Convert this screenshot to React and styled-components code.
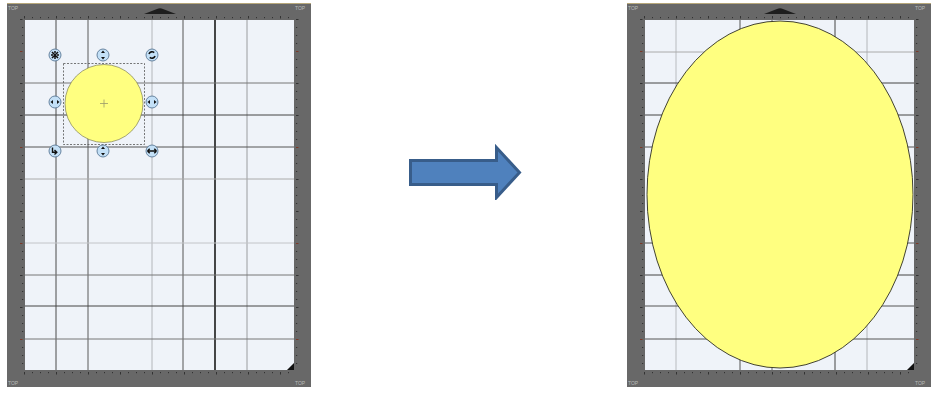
import React from "react";
import styled, { createGlobalStyle } from "styled-components";

const GlobalStyle = createGlobalStyle`
  html, body {
    margin: 0;
    padding: 0;
    background: #ffffff;
    font-family: "Liberation Sans", Arial, sans-serif;
  }
`;

const Page = styled.div`
  width: 932px;
  height: 396px;
  display: flex;
  align-items: flex-start;
  padding: 3px 0 0 7px;
  box-sizing: border-box;
  overflow: hidden;
`;

const Mat = styled.div`
  width: 304px;
  height: 384px;
  background: #686868;
  border-top: 1px solid #b7a77a;
  box-sizing: border-box;
  display: grid;
  grid-template-columns: 18px 269px 17px;
  grid-template-rows: 16px 350px 17px;
`;

const Strip = styled.svg`
  display: block;
  grid-column: ${({ $col }) => $col};
  grid-row: ${({ $row }) => $row};
  overflow: visible;
`;

const Canvas = styled.svg`
  display: block;
  grid-column: 2;
  grid-row: 2;
  background: #eff3f9;
`;

const ArrowBox = styled.div`
  margin: 137px 100px 0 96px;
  width: 120px;
  height: 60px;
  display: flex;
`;

const CornerText = styled.text`
  font-family: "Liberation Sans", Arial, sans-serif;
  font-size: 5px;
  fill: #b9b9b9;
`;

const ticks = (len) => {
  const out = [];
  for (let i = 0; -1 + i * 8 <= len; i++) out.push({ p: -1 + i * 8, big: i % 4 === 0 });
  return out;
};

function TopRuler() {
  return (
    <Strip $col="1 / 4" $row="1" width="304" height="16">
      <CornerText x="1" y="6">TOP</CornerText>
      <CornerText x="288" y="6">TOP</CornerText>
      <path d="M137 10 L150 5 Q153 3.5 156 5 L169 10 Z" fill="#1e1e1e" />
      {ticks(269).map((t, i) => (
        <rect key={i} x={18 + t.p} y={t.big ? 12 : 13} width="1" height={t.big ? 2.5 : 1.2} fill="#333" />
      ))}
    </Strip>
  );
}

function BottomRuler() {
  return (
    <Strip $col="1 / 4" $row="3" width="304" height="17">
      <CornerText x="1" y="15">TOP</CornerText>
      <CornerText x="288" y="15">TOP</CornerText>
      {ticks(269).map((t, i) => (
        <rect key={i} x={18 + t.p} y="2" width="1" height={t.big ? 2.5 : 1.2} fill="#333" />
      ))}
    </Strip>
  );
}

function SideRuler({ side }) {
  const w = side === "left" ? 18 : 17;
  return (
    <Strip $col={side === "left" ? 1 : 3} $row="2" width={w} height="350">
      {ticks(350).map((t, i) => (
        <rect
          key={i}
          x={side === "left" ? (t.big ? 13 : 15) : 2}
          y={t.p}
          width={t.big ? 2.5 : 1.2}
          height="1"
          fill={t.big && i % 12 === 4 ? "#7a3a2a" : "#333"}
        />
      ))}
    </Strip>
  );
}

function GridLines({ vertical, horizontal }) {
  return (
    <g>
      {vertical.map(([x, c, w], i) => (
        <line key={"v" + i} x1={x} y1="0" x2={x} y2="350" stroke={c} strokeWidth={w || 1} />
      ))}
      {horizontal.map(([y, c, w], i) => (
        <line key={"h" + i} x1="0" y1={y} x2="269" y2={y} stroke={c} strokeWidth={w || 1} />
      ))}
    </g>
  );
}

function CornerMark() {
  return <path d="M269 343 L269 350 L262 350 Z" fill="#111" />;
}

function Handle({ x, y, kind }) {
  return (
    <g transform={`translate(${x} ${y})`}>
      <circle r="6" fill="#c3e0f7" stroke="#5a7896" strokeWidth="0.9" />
      {kind === "rotate" && (
        <path d="M-3 -1 A3.2 3.2 0 0 1 2.2 -2.4 M3 1 A3.2 3.2 0 0 1 -2.2 2.4" stroke="#111" strokeWidth="1.6" fill="none" />
      )}
      {kind === "v" && (
        <path d="M0 -4.5 L-2 -2 L2 -2 Z M0 4.5 L-2 2 L2 2 Z" fill="#111" />
      )}
      {kind === "h" && (
        <path d="M-4.5 0 L-2 -2 L-2 2 Z M4.5 0 L2 -2 L2 2 Z" fill="#111" />
      )}
      {kind === "size" && (
        <path d="M-4.5 0 L4.5 0 M-4.5 0 L-2.3 -2.2 M-4.5 0 L-2.3 2.2 M4.5 0 L2.3 -2.2 M4.5 0 L2.3 2.2" stroke="#111" strokeWidth="1.4" fill="none" />
      )}
      {kind === "del" && (
        <path d="M-3 -3 L3 3 M3 -3 L-3 3 M0 -4 V-2 M0 4 V2 M-4 0 H-2 M4 0 H2" stroke="#111" strokeWidth="1.5" />
      )}
      {kind === "flip" && (
        <path d="M-2.5 -3.5 L-2.5 1.2 L1.5 1.2 M-0.5 -1 L1.8 1.2 L-0.5 3.4" stroke="#111" strokeWidth="1.4" fill="none" />
      )}
    </g>
  );
}

const leftV = [
  [31, "#4a4a4a"],
  [63, "#5a5a5a"],
  [127, "#b3b6ba"],
  [158, "#555"],
  [190, "#1a1a1a", 1.6],
  [222, "#9a9c9f"],
];
const leftH = [
  [63, "#777"],
  [95, "#444"],
  [127, "#555"],
  [159, "#aaa"],
  [223, "#c2c4c8"],
  [255, "#777"],
  [286, "#444"],
  [319, "#777"],
];

const rightV = [
  [31, "#b8bbbf"],
  [95, "#555"],
  [127, "#666"],
  [190, "#444"],
  [222, "#b3b6ba"],
];
const rightH = [
  [32, "#aaa"],
  [63, "#444"],
  [95, "#444"],
  [127, "#555"],
  [223, "#555"],
  [255, "#444"],
  [286, "#555"],
  [319, "#555"],
];

function BeforeMat() {
  return (
    <Mat>
      <TopRuler />
      <SideRuler side="left" />
      <Canvas width="269" height="350" viewBox="0 0 269 350">
        <GridLines vertical={leftV} horizontal={leftH} />
        <rect x="38.5" y="43.5" width="81" height="81" fill="none" stroke="#555" strokeWidth="0.8" strokeDasharray="2 1.5" />
        <circle cx="79" cy="83.5" r="39" fill="#ffff80" stroke="#6b6b40" strokeWidth="0.6" />
        <path d="M75 83.5 H83 M79 79.5 V87.5" stroke="#9a9a6a" strokeWidth="0.8" />
        <Handle x={30} y={35} kind="del" />
        <Handle x={78} y={35} kind="v" />
        <Handle x={127} y={35} kind="rotate" />
        <Handle x={30} y={82} kind="h" />
        <Handle x={127} y={82} kind="h" />
        <Handle x={30} y={131} kind="flip" />
        <Handle x={78} y={131} kind="v" />
        <Handle x={127} y={131} kind="size" />
        <CornerMark />
      </Canvas>
      <SideRuler side="right" />
      <BottomRuler />
    </Mat>
  );
}

function AfterMat() {
  return (
    <Mat>
      <TopRuler />
      <SideRuler side="left" />
      <Canvas width="269" height="350" viewBox="0 0 269 350">
        <GridLines vertical={rightV} horizontal={rightH} />
        <ellipse cx="135" cy="174.5" rx="133" ry="173.5" fill="#ffff80" stroke="#2e2e22" strokeWidth="0.9" />
        <CornerMark />
      </Canvas>
      <SideRuler side="right" />
      <BottomRuler />
    </Mat>
  );
}

function BlockArrow() {
  return (
    <svg width="120" height="60" viewBox="0 0 120 60">
      <path
        d="M3.5 20.5 H89.5 V7.5 L112.5 32.5 L89.5 57.5 V44.5 H3.5 Z"
        fill="#4f81bd"
        stroke="#385d8a"
        strokeWidth="3"
        strokeLinejoin="miter"
      />
    </svg>
  );
}

export default function App() {
  return (
    <>
      <GlobalStyle />
      <Page>
        <BeforeMat />
        <ArrowBox>
          <BlockArrow />
        </ArrowBox>
        <AfterMat />
      </Page>
    </>
  );
}
